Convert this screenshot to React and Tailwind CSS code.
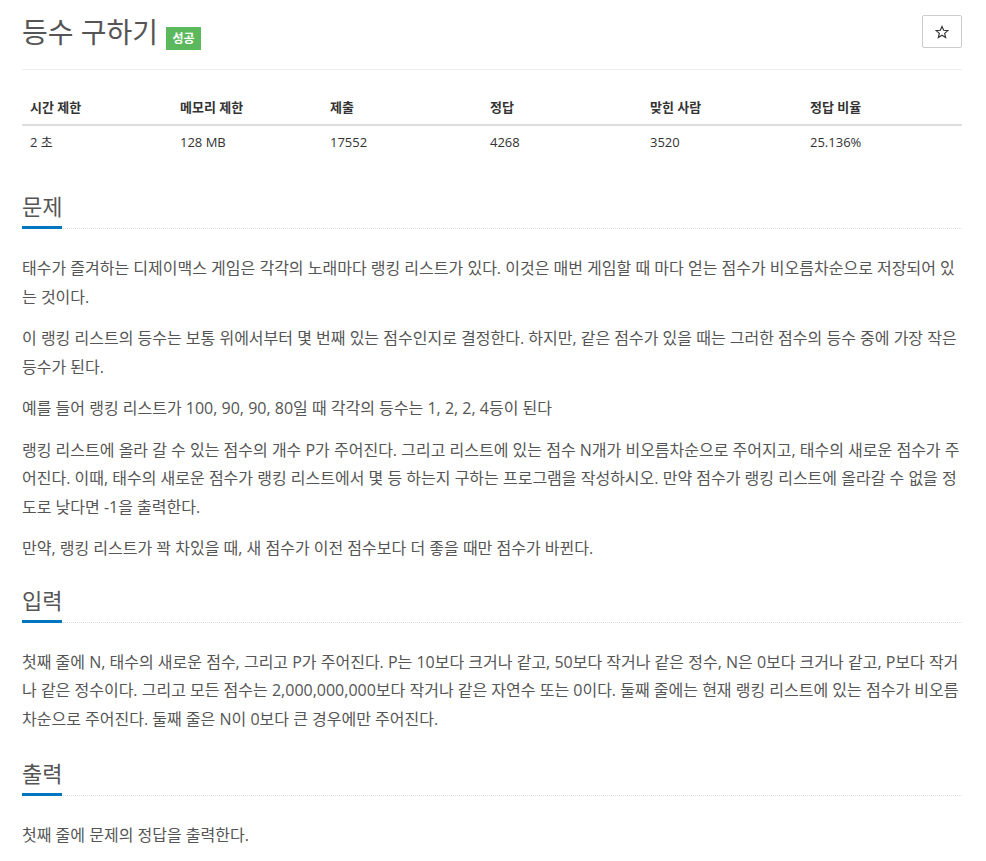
import React from 'react';

const stats = [
  { label: '시간 제한', value: '2 초', w: 'w-[150px]' },
  { label: '메모리 제한', value: '128 MB', w: 'w-[150px]' },
  { label: '제출', value: '17552', w: 'w-[160px]' },
  { label: '정답', value: '4268', w: 'w-[160px]' },
  { label: '맞힌 사람', value: '3520', w: 'w-[160px]' },
  { label: '정답 비율', value: '25.136%', w: 'w-[160px]' },
];

const Section = ({ title, className = '', children }) => (
  <section className={className}>
    <div className="border-b border-dotted border-[#ddd]">
      <h2 className="inline-block -mb-px border-b-[3px] border-[#0076c0] pb-[6px] text-[22px] leading-[28px] font-normal text-[#555]">
        {title}
      </h2>
    </div>
    <div className="mt-[25px] text-[16px] leading-[28.5px] text-[#555] [&>p]:mb-[13px] [&>p:last-child]:mb-0">
      {children}
    </div>
  </section>
);

const App = () => {
  return (
    <div
      className="min-h-screen bg-white pl-[22px] pr-[24px] pb-10 text-[#555]"
      style={{ fontFamily: '"Open Sans", "Noto Sans CJK KR", sans-serif' }}
    >
      <div className="flex items-start justify-between pt-[15px]">
        <div className="flex items-start">
          <h1 className="text-[28px] leading-[34px] font-normal text-[#555]">등수 구하기</h1>
          <span className="ml-[8px] mt-[12px] flex h-[23px] w-[35px] items-center justify-center bg-[#5cb85c] text-[12px] font-bold text-white">
            성공
          </span>
        </div>
        <button className="flex h-[33px] w-[40px] items-center justify-center rounded-[2px] border border-[#ccc] bg-white">
          <svg width="14" height="14" viewBox="0 0 24 24" fill="none" stroke="#333" strokeWidth="2" strokeLinejoin="miter">
            <polygon points="12,2.5 14.9,9 22,9.6 16.6,14.3 18.2,21.3 12,17.6 5.8,21.3 7.4,14.3 2,9.6 9.1,9" />
          </svg>
        </button>
      </div>

      <hr className="mt-[19px] border-t border-[#eee]" />

      <table className="mt-[19px] w-[940px] border-collapse text-left text-[#333]">
        <thead>
          <tr className="border-b-2 border-[#ddd]">
            {stats.map((s) => (
              <th key={s.label} className={`${s.w} px-2 pt-[8px] pb-[7px] text-[13px] leading-[20px] font-bold`}>
                {s.label}
              </th>
            ))}
          </tr>
        </thead>
        <tbody>
          <tr>
            {stats.map((s) => (
              <td key={s.label} className="px-2 pt-[7px] pb-[8px] text-[13px] leading-[18px]">
                {s.value}
              </td>
            ))}
          </tr>
        </tbody>
      </table>

      <Section title="문제" className="mt-[33px]">
        <p>
          태수가 즐겨하는 디제이맥스 게임은 각각의 노래마다 랭킹 리스트가 있다. 이것은 매번 게임할 때 마다 얻는 점수가 비오름차순으로 저장되어 있는 것이다.
        </p>
        <p>
          이 랭킹 리스트의 등수는 보통 위에서부터 몇 번째 있는 점수인지로 결정한다. 하지만, 같은 점수가 있을 때는 그러한 점수의 등수 중에 가장 작은 등수가 된다.
        </p>
        <p>예를 들어 랭킹 리스트가 100, 90, 90, 80일 때 각각의 등수는 1, 2, 2, 4등이 된다</p>
        <p>
          랭킹 리스트에 올라 갈 수 있는 점수의 개수 P가 주어진다. 그리고 리스트에 있는 점수 N개가 비오름차순으로 주어지고, 태수의 새로운 점수가 주어진다. 이때, 태수의 새로운 점수가 랭킹 리스트에서 몇 등 하는지 구하는 프로그램을 작성하시오. 만약 점수가 랭킹 리스트에 올라갈 수 없을 정도로 낮다면 -1을 출력한다.
        </p>
        <p>만약, 랭킹 리스트가 꽉 차있을 때, 새 점수가 이전 점수보다 더 좋을 때만 점수가 바뀐다.</p>
      </Section>

      <Section title="입력" className="mt-[23px]">
        <p>
          첫째 줄에 N, 태수의 새로운 점수, 그리고 P가 주어진다. P는 10보다 크거나 같고, 50보다 작거나 같은 정수, N은 0보다 크거나 같고, P보다 작거나 같은 정수이다. 그리고 모든 점수는 2,000,000,000보다 작거나 같은 자연수 또는 0이다. 둘째 줄에는 현재 랭킹 리스트에 있는 점수가 비오름차순으로 주어진다. 둘째 줄은 N이 0보다 큰 경우에만 주어진다.
        </p>
      </Section>

      <Section title="출력" className="mt-[26px]">
        <p>첫째 줄에 문제의 정답을 출력한다.</p>
      </Section>
    </div>
  );
};

export default App;
